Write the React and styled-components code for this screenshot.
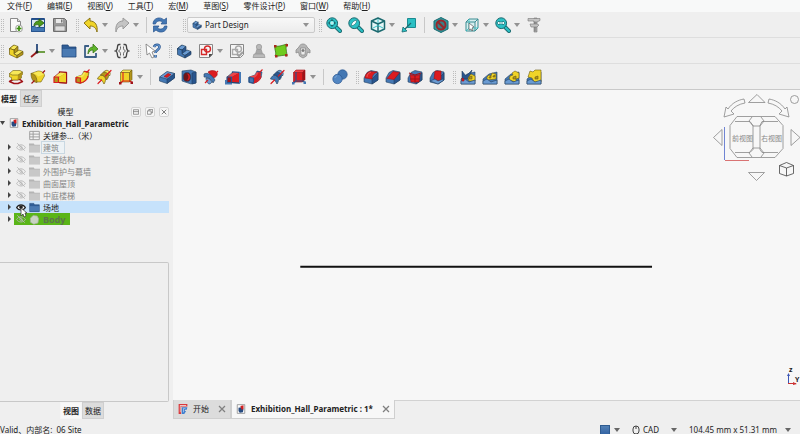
import React, { useState } from 'react';
import styled, { createGlobalStyle } from 'styled-components';

const GlobalStyle = createGlobalStyle`
  * {
    box-sizing: border-box;
  }

  body {
    margin: 0;
    overflow: hidden;
    background: #efefef;
    color: #222;
    font: 8px/12px 'Noto Sans', 'Noto Sans CJK SC', sans-serif;
  }

  button,
  select {
    margin: 0;
    padding: 0;
    border: 0;
    background: none;
    color: inherit;
    font: inherit;
  }

  svg {
    display: block;
    flex: none;
  }
`;

const Window = styled.div`
  display: flex;
  flex-direction: column;
  height: 100vh;
`;

const MenuBar = styled.nav`
  display: flex;
  gap: 15px;
  height: 12px;
  padding-left: 7px;
  background: #f8f9f9;
`;

const MenuButton = styled.button`
  white-space: nowrap;
`;

const ToolRow = styled.div`
  display: flex;
  align-items: center;
  height: 26px;
  border-bottom: 1px solid ${({ $last }) => ($last ? '#c9c9c9' : '#dedede')};
`;

const ToolButton = styled.button`
  display: flex;
  flex: none;
  align-items: center;
  justify-content: center;
  width: 22px;
  height: 22px;
`;

const ArrowButton = styled.button`
  display: flex;
  flex: none;
  align-items: center;
  width: 9px;
  height: 22px;
`;

const Caret = styled.span`
  flex: none;
  border: 3px solid transparent;
  border-top: 4px solid ${({ $dark }) => ($dark ? '#666' : '#929292')};
  border-bottom: 0;
`;

const Handle = styled.span`
  flex: none;
  width: 4px;
  height: 14px;
  margin-left: ${({ $gap = 5 }) => $gap}px;
  background:
    linear-gradient(#efefef 50%, transparent 50%) 0 0 / 2px 2px,
    linear-gradient(90deg, #bcbcbc 50%, transparent 50%) 0 0 / 2px 2px;
`;

const Divider = styled.span`
  flex: none;
  width: 1px;
  height: 16px;
  margin: 0 ${({ $gap = 5 }) => $gap}px 0 4px;
  background: #c8c8c8;
`;

const Workbench = styled.label`
  display: flex;
  align-items: center;
  width: 128px;
  height: 16px;
  padding: 0 5px 0 4px;
  border: 1px solid #cacaca;
  border-radius: 2px;
  background: linear-gradient(#f8f8f8, #ececec);
`;

const WorkbenchSelect = styled.select`
  flex: 1;
  margin-left: 3px;
  appearance: none;
  outline: 0;
`;

const Main = styled.main`
  display: flex;
  flex: 1;
  gap: 4px;
  min-height: 0;
`;

const Side = styled.aside`
  display: flex;
  flex: none;
  flex-direction: column;
  width: 169px;
`;

const SideTabs = styled.div`
  display: flex;
  height: 17px;
  padding-left: ${({ $indent = 0 }) => $indent}px;
`;

const SideTab = styled.button`
  padding: 0 2px;
  border: 1px solid ${({ $active }) => ($active ? '#f5f5f5' : '#cfcfcf')};
  background: ${({ $active }) => ($active ? '#f8f8f8' : '#dcdcdc')};
  font-weight: ${({ $active }) => ($active ? 700 : 400)};
  ${({ $flush }) => $flush && 'padding-left: 0;'}
`;

const PanelTitle = styled.div`
  display: flex;
  align-items: center;
  height: 10px;
  gap: 4px;
`;

const PanelName = styled.span`
  flex: 1;
  padding-left: 4px;
  text-align: center;
`;

const PanelButton = styled.button`
  display: flex;
  align-items: center;
  justify-content: center;
  width: 10px;
  height: 10px;
  border: 1px solid #d4d4d4;
  border-radius: 2px;
  background: #f6f6f6;
`;

const Tree = styled.ul`
  flex: 1;
  margin: 0;
  padding: 0;
  list-style: none;
`;

const Node = styled.li`
  display: flex;
  align-items: center;
  height: 12px;
  padding-left: ${({ $root }) => ($root ? 0 : 7)}px;
  background: ${({ $selected }) => ($selected ? '#c6e2fb' : 'none')};
  color: ${({ $dim }) => ($dim ? '#858585' : '#222')};
`;

const Expander = styled.button`
  width: 7px;
  height: 12px;
  visibility: ${({ $hidden }) => ($hidden ? 'hidden' : 'visible')};
`;

const NodeBody = styled.span`
  display: flex;
  align-items: center;
  height: 12px;
  padding: 0 4px 0 2px;
  ${({ $active }) => $active && `
    background: #5ab518;
    color: #5d7350;
  `}
`;

const EyeButton = styled.button`
  position: relative;
  width: 11px;
  height: 12px;
  margin-right: 2px;
`;

const EyeIcon = styled.span`
  display: flex;
  align-items: center;
  height: 12px;
`;

const Pointer = styled.svg`
  position: absolute;
  top: 6px;
  left: 4px;
  z-index: 1;
`;

const NodeLabel = styled.span`
  margin-left: 2px;
  padding: 0 1px;
  font-size: ${({ $large }) => ($large ? 9 : 8)}px;
  font-weight: ${({ $bold }) => ($bold ? 700 : 400)};
  line-height: 11px;
  ${({ $boxed }) => $boxed && `
    padding-right: 5px;
    outline: 1px solid #c9d8e2;
    background: #edf2f5;
  `}
`;

const Properties = styled.section`
  height: 140px;
  border: 1px solid #c8c8c8;
  border-left: 0;
  border-radius: 0 2px 2px 0;
`;

const Documents = styled.div`
  display: flex;
  flex: 1;
  flex-direction: column;
  min-width: 0;
`;

const View = styled.section`
  position: relative;
  flex: 1;
  background: #f7f7f7;
`;

const Scene = styled.svg`
  position: absolute;
  inset: 0;
  width: 100%;
  height: 100%;
`;

const NavCube = styled.svg`
  position: absolute;
  top: 0;
  right: 0;
`;

const AxisCross = styled.svg`
  position: absolute;
  right: 0;
  bottom: 12px;
`;

const DocTabs = styled.div`
  display: flex;
  height: 19px;

  &::after {
    flex: 1;
    border-top: 1px solid #d2d2d2;
    content: '';
  }
`;

const DocTab = styled.div`
  display: flex;
  align-items: center;
  padding: 0 4px;
  border: 1px solid #cfcfcf;
  border-top: 0;
  background: ${({ $active }) => ($active ? '#f7f7f7' : '#dcdcdc')};
  font-weight: ${({ $active }) => ($active ? 700 : 400)};
`;

const DocName = styled.button`
  display: flex;
  align-items: center;
  gap: 5px;
  white-space: nowrap;
`;

const CloseButton = styled.button`
  margin-left: 9px;
`;

const StatusBar = styled.footer`
  display: flex;
  flex: none;
  align-items: center;
  height: 15px;
  padding: 7px 9px 0 0;
  white-space: nowrap;
`;

const StatusText = styled.span`
  flex: 1;
`;

const StatusButton = styled.button`
  display: flex;
  align-items: center;
  height: 10px;
  margin-left: ${({ $gap = 12 }) => $gap}px;
`;

const StatusValue = styled.span`
  margin: 0 ${({ $gap }) => $gap}px 0 3px;
`;

const Swatch = styled.span`
  width: 10px;
  height: 10px;
  margin-right: 4px;
  border: 1px solid #2e5b90;
  background: linear-gradient(#5280b5, #3465a4);
`;

const Y = '#f0d428';
const YL = '#f8e858';
const YD = '#b3951a';
const R = '#dc1c20';
const RL = '#ec4549';
const RD = '#a01218';
const B = '#4478b4';
const BL = '#6a9bd2';
const BD = '#28558f';
const G = '#c4c4c4';
const TEAL = '#2bc0c4';
const TD = '#1b6a70';
const K = '#23405f';
const KY = '#6d5c12';

function Solid({ light, main, dark, line }) {
  return (
    <g stroke={line} strokeWidth="0.7" strokeLinejoin="round">
      <path fill={main} d="M1.500 5.500l4.500-3.500v5l-4.500 0z" />
      <path fill={light} d="M1.500 5.500L6 2l4 1.500L6 7z" />
      <path fill={dark} d="M6 7l4-3.500V8l-4 3z" />
      <path fill={main} d="M1.500 5.500L6 7v4l3 1.500V15l-7.500-3.500z" />
      <path fill={light} d="M6 10.500l5-3.500 4 1.500-6 4z" />
      <path fill={dark} d="M9 12.500l6-4v3L9 15z" />
    </g>
  );
}

function Magnifier({ children }) {
  return (
    <>
      <path stroke={TD} strokeWidth="4" strokeLinecap="round" d="M10 10l4 4" />
      <path stroke={TEAL} strokeWidth="2.200" strokeLinecap="round" d="M10 10l4 4" />
      <circle cx="6.200" cy="6.200" r="5.400" fill={TEAL} stroke={TD} />
      {children}
    </>
  );
}

function Sketch({ color, mark }) {
  return (
    <>
      <path fill="#f6f6f6" stroke="#888" d="M1.500 1.500h13v10l-3 3h-10z" />
      <g stroke={color} strokeWidth="1.400">
        <path d="M3.500 6.500h5v5h-5z" />
        <circle cx="9.500" cy="6" r="3" />
      </g>
      {mark && <path stroke="#a0a0a0" strokeWidth="2" d="M8 11l2 2 4-4" />}
      {!mark && <path fill="#444" d="M14.500 11l-3.500 3.500V11z" />}
    </>
  );
}

function Loft({ sub }) {
  return (
    <g strokeLinejoin="round">
      <path fill={sub ? RD : YD} stroke={sub ? BD : RD} strokeWidth="1.300" d="M7.500 3l7 .5v10.500l-7-.5z" />
      <path fill={sub ? RL : YL} d="M2 8l6-4.500 6 .5-7 4z" />
      <path fill={sub ? R : Y} d="M7 8l7-4v9.500L7 13z" />
      <path fill={sub ? RD : YD} stroke={sub ? BD : R} strokeWidth="1.200" d="M2 8h4.500v5.500H2z" />
      <path stroke={sub ? K : RD} strokeWidth="0.700" d="M2 8l6-5M6.500 13.500l8 .5" />
      {sub && <path fill={B} d="M0 11h2v3h5v1.500H0zM14 3h2v11h-2z" />}
    </g>
  );
}

function Pipe({ sub }) {
  return (
    <g strokeLinejoin="round">
      <path fill={sub ? B : YD} stroke={sub ? K : KY} strokeWidth="0.6" d="M2 8l6-2 2-4 5 1-1 6-4 4-4 1.500-4-1z" />
      <path fill={sub ? R : Y} d="M6 9c3-1 4-3 5-6l3 1c0 4-2 7-5 9l-3 1z" />
      <path fill={sub ? RL : YL} d="M2 8l6-2 2-3 1.500.5C10.500 6 9 8.500 6 9z" />
      <path stroke={sub ? BD : R} strokeWidth="1.200" d="M2 8.500l4.500.5v5L2 13zM10 2.500l4.500.5" />
      <path stroke={R} strokeWidth="1.100" d="M12.500 3.500l3-3M6.500 14c4-1 7-3 7.500-7" />
    </g>
  );
}

function Helix({ sub }) {
  return (
    <g strokeLinejoin="round" stroke={sub ? K : KY} strokeWidth="0.700">
      <path fill={sub ? B : Y} d="M1.500 10c1-3 4-5 6.500-3 2 2 2 5 0 8-1-2-2-4-3.500-4.500z" />
      <path fill={sub ? BD : YD} d="M4.500 6c2-3 5-4 7-2 2 2 1 5-1 7-1-3-3-5-6-5z" />
      <path fill={sub ? BL : YL} d="M7.500 3c2-2 4-2 5-1 2 1 2 3 1 5-1-2-3-4-6-4z" />
      <path stroke={R} strokeWidth="1.200" strokeLinecap="round" d="M2 14.500l3.500-3.500M9.500 7L15 1.500" />
    </g>
  );
}

function Revolve({ sub }) {
  return sub ? (
    <g strokeLinejoin="round" strokeWidth="0.6">
      <path fill={R} stroke={RD} d="M5 3c3-2 8-2 9 1 1 2-1 4-3 5L9 8z" />
      <path fill={B} stroke={K} d="M1 5c3-2 8 1 11 6l-2 3c-1-3-5-6-9-6z" />
      <path fill={BL} stroke={K} d="M3 9c3 0 5 2 6 4l-2 2c-2 0-4-2-4-6z" />
      <path stroke={R} strokeWidth="1.200" d="M2 14l3-3M12 5l3-3" />
    </g>
  ) : (
    <g strokeLinejoin="round" strokeWidth="0.6">
      <path fill={Y} stroke={KY} d="M1 4.500L8 2c4 0 6.500 2 6.500 5L11 13H6z" />
      <path fill={YL} d="M2 4.500L8 2.500c3 0 5 1 6 3l-6 2c-1-2-3-3-6-3z" />
      <path fill={YD} stroke={KY} d="M1 4.500c4 0 6 4 6 9-4 0-6-4-6-9z" />
      <path stroke={RD} strokeWidth="1.200" d="M1.500 14.500l3-3M12.500 4L15 1.500" />
    </g>
  );
}

function Primitive({ sub }) {
  return (
    <g strokeLinejoin="round">
      <path fill={sub ? R : Y} stroke={sub ? RD : KY} strokeWidth="0.600" d="M2.500 3.500h9v9.500h-9z" />
      <path fill={sub ? RL : YL} stroke={sub ? RD : KY} strokeWidth="0.600" d="M2.500 3.500L5 1h9l-2.500 2.500z" />
      <path fill={sub ? RD : YD} stroke={sub ? RD : KY} strokeWidth="0.600" d="M11.500 3.500L14 1v9.500L11.500 13z" />
      <path stroke={sub ? BD : R} strokeWidth="1.100" d="M2 14.500l3-2.500h7l2 1.500M5 12V3" />
      <path fill={sub ? B : RD} d="M1 13h2.500v2.500H1zM12.500 12.500H15V15h-2.500z" />
    </g>
  );
}

function Dress({ kind }) {
  const face = {
    fillet: 'M2 9c0-4 3-6 5-6.500l7 .5c-3 1-5 3-5 7z',
    chamfer: 'M2 9.500l6-7 6.500 1-5.500 7z',
    draft: 'M3 5.500l5 1.500 5-1.500-1 7.500H4z',
    thickness: 'M6 2h6v9l-3 1-4-2z',
  }[kind];
  return (
    <g stroke={K} strokeWidth="0.6" strokeLinejoin="round">
      <path fill={B} d="M1 9l3-5.500L8 1.500l7 1.500v8l-6 4-8-2z" />
      <path fill={BD} d="M9 10l6-6v7l-6 4z" />
      <path fill={R} stroke={RD} d={face} />
      {kind === 'fillet' && <path stroke="#f08080" d="M4 8c0-3 2-4 4-5" />}
      {kind === 'draft' && <path stroke={RD} strokeWidth="1.100" d="M2 4l6 2 6-2M8 6v8M3 10h10" />}
      {kind === 'thickness' && <path fill={BL} d="M1 12l5-2 3 2 5-2 1 1-6 4z" />}
    </g>
  );
}

function Pattern({ kind }) {
  const bumps = {
    mirrored: 'M8 9l3-4 4 2v5H9z',
    linear: 'M5 8l2-2 2 1 1-3 4 1v5l-9 1z',
    polar: 'M5 11l1-4 3-1-1-2 3-2 4 2v5l-3 1v3z',
    multi: 'M2 8l2-6 3 1 2-2h6v12H8l-2-4z',
  }[kind];
  return (
    <g stroke={K} strokeWidth="0.6" strokeLinejoin="round">
      <path fill={B} d="M1 10l6-5 8-2v12H1z" />
      {kind === 'mirrored' && <path fill={BD} d="M2 2l4 5 6-6-3 9H2z" />}
      <path fill={Y} stroke={KY} d={bumps} />
      <path fill={YD} stroke={KY} d={kind === 'linear' ? 'M7 8l2-1v2H7zM11 7l2-1v2h-2z' : 'M9 8l3-1v3H9z'} />
      <path fill={BL} d="M1 12l4-2 4 3 6-2v4H1z" />
      {kind === 'mirrored' && <path fill={R} stroke={RD} d="M2 9l2 1v2H2z" />}
    </g>
  );
}

const glyphs = {
  new: (
    <>
      <path fill="#fafafa" stroke="#8a8a8a" d="M2.500 1.500h7l3 3v10h-10z" />
      <path fill="#ddd" stroke="#8a8a8a" d="M9.500 1.500v3h3" />
      <circle cx="11" cy="11.500" r="3.500" fill="#f0f5ec" stroke="#8a8a8a" strokeWidth="0.7" />
      <path stroke="#3f8f12" strokeWidth="1.700" d="M11 9v5M8.500 11.500h5" />
    </>
  ),
  open: (
    <>
      <path fill="#dbe6f0" stroke="#204a87" d="M1.500 1.500h13v13h-13z" />
      <path fill={B} stroke={BD} d="M1.500 9.500h3l2 1h8v4h-13zM1.500 2.500h13" />
      <path fill="#4e9a1a" stroke="#245c08" strokeWidth="0.8" d="M4 9c0-4 3-5 5-5V2l5 4-5 4V8C7 7 5 8 4 9z" />
    </>
  ),
  save: (
    <>
      <path fill="#9a9a9a" stroke="#6d6d6d" d="M1.500 1.500h11l2 2v11h-13z" />
      <path fill="#e9e9e9" d="M4 2h7v4H4z" />
      <path fill="#777" d="M9 2.500h1.500v3H9z" />
      <path fill="#dedede" stroke="#777" strokeWidth="0.6" d="M3 9h10v5H3z" />
    </>
  ),
  undo: <path fill={Y} stroke="#8a7414" strokeLinejoin="round" d="M1 6l6-5v3c5 0 8 4 7 11-1-4-3-6-7-6v3z" />,
  redo: <path fill={G} stroke="#999" strokeLinejoin="round" d="M15 6L9 1v3c-5 0-8 4-7 11 1-4 3-6 7-6v3z" />,
  refresh: (
    <g fill={B} stroke={BD} strokeWidth="0.7" strokeLinejoin="round">
      <path d="M1 7C1 1 8-1 12 3l2.500-2v6H9l1.500-2C8 3 4 4 3.500 7z" />
      <path d="M15 9c0 6-7 8-11 4l-2.500 2V9H7l-1.500 2c2.500 2 6.500 1 7-2z" />
    </g>
  ),
  fitAll: (
    <Magnifier>
      <path fill={TD} d="M6 2l2 2H4zM6 10l2-2H4zM2 6l2-2v4zM10 6L8 4v4z" />
      <path stroke="#e8ffff" d="M6 4v4M4 6h4" />
    </Magnifier>
  ),
  fitSel: (
    <Magnifier>
      <path fill="#f7ffff" stroke={TD} strokeWidth="0.6" d="M3 9l1-3 2-2 3-1-1 3-2 2z" />
    </Magnifier>
  ),
  zoom: (
    <Magnifier>
      <path fill="#e8ffff" stroke={TD} strokeWidth="0.7" d="M2 6l2-2v1h4V4l2 2-2 2V7H4v1z" />
    </Magnifier>
  ),
  iso: (
    <g stroke={TD} strokeWidth="1.500" strokeLinejoin="round">
      <path fill="#e4f6f6" d="M8 1l6.500 3v8L8 15l-6.500-3V4z" />
      <path d="M1.500 4L8 7l6.500-3M8 7v8" />
      <path stroke={TEAL} strokeWidth="0.9" d="M8 2v4M3 11l5-2.500 5 2.500" />
    </g>
  ),
  align: (
    <>
      <path fill={TEAL} stroke="#1b8a90" d="M6.500 1.500h8v9h-8z" />
      <path stroke={TD} strokeWidth="1.200" d="M10 6l-6 6" />
      <path fill={TEAL} stroke={TD} strokeWidth="0.8" d="M1 15l1-5 4 4z" />
    </>
  ),
  noDraw: (
    <>
      <path fill="#2a9aa0" stroke={TD} d="M8 .5l7 3.500v8l-7 3.500L1 12V4z" />
      <circle cx="8" cy="8" r="4.500" fill="#3a8086" stroke="#96282c" strokeWidth="2" />
      <path stroke="#96282c" strokeWidth="2" d="M5 5l6 6" />
    </>
  ),
  boxSel: (
    <>
      <path fill="#d6efef" stroke="#3b8c92" d="M2 5h9v9H2zM2 5l3-3h9l-3 3M11 14l3-3V2" />
      <path stroke={TEAL} strokeWidth="0.8" d="M5 2v9h9M5 11l-3 3" />
      <path fill="#fff" stroke="#555" strokeWidth="0.7" d="M5 6l5 4-2 1 1 2-1 1-1-2-2 1z" />
    </>
  ),
  caliper: (
    <g stroke="#777" strokeWidth="0.6">
      <path fill="#aaa" d="M8 1h3v14H8z" />
      <path fill="#c4c4c4" d="M2 1.500h12v2l-3 1.500H8V4H2zM4 7h7l2 1-2 2H5z" />
      <path stroke="#666" d="M8 6h2M8 11h2M8 13h2" />
    </g>
  ),
  part: <Solid light={YL} main={Y} dark={YD} line={KY} />,
  body: <Solid light={BL} main={B} dark={BD} line={K} />,
  axes: (
    <>
      <path stroke="#26487a" strokeWidth="1.800" d="M7 9V1" />
      <path stroke="#9b1b1b" strokeWidth="1.800" d="M7 9l-6 5" />
      <path stroke="#6f9f46" strokeWidth="2" d="M7 9h8" />
      <circle cx="7" cy="9" r="1.500" fill="#222" />
    </>
  ),
  folder: (
    <>
      <path fill="#2f5d96" stroke="#1e4577" strokeWidth="0.8" d="M1 2h6l1 2h7v10H1z" />
      <path fill="#4a7ab2" d="M1.500 6h13v7.500h-13z" />
    </>
  ),
  link: (
    <>
      <path stroke="#3b5f86" strokeWidth="1.800" strokeLinejoin="round" d="M6 3H2v11h11V10" />
      <path fill="#5fb52a" stroke="#2f6a10" strokeWidth="0.7" d="M5 11c0-5 2-7 5-7V1l5 5-5 4V7C8 7 6 8 5 11z" />
    </>
  ),
  braces: (
    <g stroke="#444" strokeWidth="1.300">
      <path d="M6.500 1.500H5c-3 0 0 5.500-3.500 6.500C5 9 2 14.500 5 14.500h1.500M9.500 1.500H11c3 0 0 5.500 3.500 6.500-3.500 1-.5 6.500-3.500 6.500H9.500" />
      <path strokeWidth="0.800" d="M6.500 3.500v2c0 1-1 2-2 2.500 1 .5 2 1.500 2 2.500v2M9.500 3.500v2c0 1 1 2 2 2.500-1 .5-2 1.500-2 2.500v2" />
    </g>
  ),
  help: (
    <>
      <path stroke={BD} strokeWidth="2.600" d="M9 4c1-3 5.500-3 5.500 0s-4 3-4 6M10.500 12v2.500" />
      <path stroke={BL} strokeWidth="1.200" d="M9 4c1-3 5.500-3 5.500 0s-4 3-4 6M10.500 12v2.500" />
      <path fill="#fff" stroke="#777" strokeWidth="0.8" d="M1 1l1 11 2.500-2 2.500 5 2-1-2-5 3-1z" />
    </>
  ),
  sketch: <Sketch color="#d42a2a" />,
  validate: <Sketch color="#aaa" mark />,
  datum: (
    <g fill="#a9a9a9" stroke="#959595" strokeWidth="0.7">
      <path d="M3.500 14L6 6h4l2.500 8z" />
      <circle cx="8" cy="4" r="2.700" fill="#b8b8b8" />
      <path fill="#bbb" d="M3 11h10l1 3.500H2z" />
    </g>
  ),
  binder: (
    <>
      <path fill="#6fcb1f" stroke="#2c6b08" strokeWidth="0.700" d="M2 3c4 1 8-1 12-2-2 4 0 8 0 12-3-2-8 1-12 0 2-4-1-6 0-10z" />
      <g fill="#a82a1c">
        <path d="M1 2h2.500v2.500H1zM12.500 1H15v2.500h-2.500zM2 12h2.500v2.500H2zM12 11h2.500v2.500H12z" />
      </g>
    </>
  ),
  clone: (
    <g fill="#b5b5b5" stroke="#8d8d8d" strokeWidth="0.8">
      <path d="M4 4c1-4 7-4 8 0l3 3v3l-2.500-1-1 4-3.500 2-3.500-2-1-4L1 10V7z" />
      <path fill="#ececec" d="M5.500 5h5L10 12H6z" />
      <circle cx="8" cy="7.500" r="1.200" fill="#777" />
    </g>
  ),
  pad: (
    <g strokeLinejoin="round">
      <path fill="#f4efef" stroke={RD} strokeWidth="1.500" d="M1.500 12.500L5 10.500h7l2.500 2-4.500 2H6z" />
      <path fill={Y} stroke={KY} strokeWidth="0.6" d="M1.500 4.500v3.500l2 .500V11h6l4-2V6.500l1-1V3z" />
      <path fill={YD} d="M10 5.500L14 3v3l-1 1v2l-3.500 2z" />
      <path fill={YL} stroke={KY} strokeWidth="0.6" d="M1.500 4.500L5 1.500h7L14.500 3 10 6H4z" />
    </g>
  ),
  revolution: <Revolve />,
  loft: <Loft />,
  pipe: <Pipe />,
  helix: <Helix />,
  primitive: <Primitive />,
  pocket: (
    <g stroke={K} strokeWidth="0.6" strokeLinejoin="round">
      <path fill={B} d="M.5 8.500L8 3l7.500 1.500V9L8 14.500.5 12z" />
      <path fill={BD} d="M8 10l7.500-5.500V9L8 14.500z" />
      <path fill={BL} d="M.5 8L8 2.500l7.500 2L8 10z" />
      <path fill={R} stroke={RD} d="M5 7.500l4-3 3 1L8 8.500z" />
    </g>
  ),
  hole: (
    <g stroke={K} strokeWidth="0.6">
      <path fill={B} d="M1 2l9-1 5 2v11l-5 1-9-3z" />
      <path fill={BD} d="M11 4l4-1v11l-4 1z" />
      <ellipse cx="6" cy="8" rx="3.700" ry="4.500" fill="#6e1419" />
      <path fill={R} stroke="none" d="M6 4.500c4 0 4 7 0 7 2-2 2-5 0-7z" />
    </g>
  ),
  groove: <Revolve sub />,
  subLoft: <Loft sub />,
  subPipe: <Pipe sub />,
  subHelix: <Helix sub />,
  subPrimitive: <Primitive sub />,
  boolean: (
    <g stroke={BD} strokeWidth="0.7">
      <circle cx="10.500" cy="5.500" r="4.700" fill="#4377b3" />
      <circle cx="5.500" cy="10" r="4.700" fill="#5286c2" />
      <path stroke="#8cb4e0" d="M3 9c0-1 1-2 2-2" />
    </g>
  ),
  fillet: <Dress kind="fillet" />,
  chamfer: <Dress kind="chamfer" />,
  draft: <Dress kind="draft" />,
  thickness: <Dress kind="thickness" />,
  mirrored: <Pattern kind="mirrored" />,
  linear: <Pattern kind="linear" />,
  polar: <Pattern kind="polar" />,
  multi: <Pattern kind="multi" />,
  greyFolder: (
    <>
      <path fill="#b4b4b4" d="M0 2h7l1 2h8v11H0z" />
      <path fill="#c8c8c8" d="M0 5h16v10H0z" />
    </>
  ),
  sheet: (
    <path fill="#f2f2f2" stroke="#999" strokeWidth="1.300" d="M1 2h14v12H1zM1 6h14M1 10h14M6 2v12" />
  ),
  doc: (
    <>
      <path fill="#fafafa" stroke="#888" strokeWidth="1.200" d="M2 1h12v14H2z" />
      <path fill="#274b80" d="M4 6l5-1 3 3-1 5-5 1-2-3z" />
      <path fill="#d12020" d="M7 3l5-1v6l-3 1z" />
    </>
  ),
  greyBody: <path fill="#c9d3c2" stroke="#9fae94" d="M2 6l4-4 6 1 2 4-1 6-6 2-5-3z" />,
  eye: (
    <>
      <path fill="#fff" stroke="#222" strokeWidth="1.800" d="M1 9c3-6 11-6 14 0-3 5-11 5-14 0z" />
      <circle cx="8" cy="8" r="3" fill="#222" />
    </>
  ),
  hidden: (
    <path stroke="#b5b5b5" strokeWidth="1.400" d="M1 9c3-6 11-6 14 0-3 5-11 5-14 0zM2 2l12 12M6 8c0-2 4-2 4 1s-4 2-4-1" />
  ),
  logo: (
    <>
      <path fill="#d9383c" d="M1 0h14v4H5v12H1z" />
      <path fill="#f4f4f4" d="M3 2h10v1H4v10H3z" />
      <path fill="#3f7fd0" d="M6 5h9l-1 4h-3v2h2l-3 5H6z" />
      <path fill="#cfe0f5" d="M8 7h4v1H9v5H8z" />
    </>
  ),
  close: <path stroke="#808080" strokeWidth="2.500" d="M2 2l12 12M14 2L2 14" />,
  thinClose: <path stroke="#555" strokeWidth="2" d="M2 2l12 12M14 2L2 14" />,
  dock: <path stroke="#666" strokeWidth="1.800" d="M1 2h14v12H1zM1 7h14" />,
  float: <path stroke="#666" strokeWidth="1.800" d="M5 5V1h10v9h-4M1 5h10v9H1z" />,
};

function Icon({ name, size = 16 }) {
  return (
    <svg width={size} height={size} viewBox="0 0 16 16" fill="none" aria-hidden="true">
      {glyphs[name]}
    </svg>
  );
}

function Tools({ names }) {
  return names.map((entry) => {
    const [name, menu] = entry.split('+');
    return (
      <React.Fragment key={name}>
        <ToolButton aria-label={name}>
          <Icon name={name} />
        </ToolButton>
        {menu !== undefined && (
          <ArrowButton aria-label={`${name} menu`}>
            <Caret />
          </ArrowButton>
        )}
      </React.Fragment>
    );
  });
}

const menus = [
  ['文件', 'F'],
  ['编辑', 'E'],
  ['视图', 'V'],
  ['工具', 'T'],
  ['宏', 'M'],
  ['草图', 'S'],
  ['零件设计', 'P'],
  ['窗口', 'W'],
  ['帮助', 'H'],
];

function Toolbars() {
  return (
    <>
      <ToolRow>
        <Handle $gap={1} />
        <Tools names={['new', 'open', 'save']} />
        <Handle />
        <Tools names={['undo+', 'redo+']} />
        <Divider $gap={2} />
        <Tools names={['refresh']} />
        <Handle $gap={12} />
        <Workbench>
          <Icon name="body" size={10} />
          <WorkbenchSelect aria-label="Workbench">
            <option>Part Design</option>
          </WorkbenchSelect>
          <Caret />
        </Workbench>
        <Handle $gap={4} />
        <Tools names={['fitAll', 'fitSel', 'iso+', 'align']} />
        <Divider />
        <Tools names={['noDraw+', 'boxSel+', 'zoom+', 'caliper']} />
      </ToolRow>
      <ToolRow>
        <Handle $gap={1} />
        <Tools names={['part', 'axes+', 'folder', 'link+', 'braces']} />
        <Handle />
        <Tools names={['help']} />
        <Handle />
        <Tools names={['body', 'sketch+', 'validate', 'datum', 'binder', 'clone']} />
      </ToolRow>
      <ToolRow $last>
        <Handle $gap={1} />
        <Tools names={['pad', 'revolution', 'loft', 'pipe', 'helix', 'primitive+']} />
        <Divider />
        <Tools names={['pocket', 'hole', 'groove', 'subLoft', 'subPipe', 'subHelix', 'subPrimitive+']} />
        <Divider />
        <Tools names={['boolean']} />
        <Handle />
        <Tools names={['fillet', 'chamfer', 'draft', 'thickness']} />
        <Handle />
        <Tools names={['mirrored', 'linear', 'polar', 'multi']} />
      </ToolRow>
    </>
  );
}

const groups = [
  { name: '建筑', boxed: true },
  { name: '主要结构' },
  { name: '外围护与幕墙' },
  { name: '曲面屋顶' },
  { name: '中庭楼梯' },
  { name: '场地', visible: true },
  { name: 'Body', active: true },
];

function Triangle({ open }) {
  return (
    <svg width="5" height="6" viewBox="0 0 5 6" aria-hidden="true">
      <path fill="#444" d={open ? 'M0 1h5L2.500 5z' : 'M1 0l3 3-3 3z'} />
    </svg>
  );
}

function ModelTree() {
  const [selected, setSelected] = useState('场地');

  return (
    <Tree>
      <Node $root>
        <Expander aria-label="collapse">
          <Triangle open />
        </Expander>
        <NodeBody>
          <Icon name="doc" size={10} />
          <NodeLabel $bold>Exhibition_Hall_Parametric</NodeLabel>
        </NodeBody>
      </Node>
      <Node>
        <Expander $hidden />
        <NodeBody>
          <EyeButton as="span" />
          <Icon name="sheet" size={11} />
          <NodeLabel>关键参…（米）</NodeLabel>
        </NodeBody>
      </Node>
      {groups.map(({ name, boxed, visible, active }) => (
        <Node
          key={name}
          $dim={!visible}
          $selected={name === selected}
          onClick={() => setSelected(name)}
        >
          <Expander aria-label={`expand ${name}`}>
            <Triangle />
          </Expander>
          <NodeBody $active={active}>
            <EyeButton aria-label={`toggle ${name}`}>
              <EyeIcon>
                <Icon name={visible ? 'eye' : 'hidden'} size={10} />
              </EyeIcon>
              {visible && (
                <Pointer width="8" height="11" viewBox="0 0 8 11">
                  <path fill="#fff" stroke="#444" strokeWidth="0.8" d="M1 1v8l2-2 1 3 2-1-1-3h2z" />
                </Pointer>
              )}
            </EyeButton>
            <Icon name={active ? 'greyBody' : visible ? 'folder' : 'greyFolder'} size={11} />
            <NodeLabel $boxed={boxed} $bold={active} $large={active}>
              {name}
            </NodeLabel>
          </NodeBody>
        </Node>
      ))}
    </Tree>
  );
}

function NavigationCube() {
  return (
    <NavCube width="90" height="96" viewBox="710 90 90 96" fill="none" stroke="#888" strokeWidth="0.8">
      <path d="M748.500 102.500l8.500-8 8 8zM748.500 172.500h16l-8 8zM713.500 137.500l8.500-8v16zM800 137.500l-9-8v16z" />
      <path d="M744 99l1 4c-6 1-11 4-14 8l3 3-10 3 2-10 2 2c4-6 10-9 16-10z" />
      <path d="M769 99l-1 4c6 1 11 4 14 8l-3 3 10 3-2-10-2 2c-4-6-10-9-16-10z" />
      <circle cx="794.500" cy="99.500" r="4" />
      <path d="M737 116.500h38l8 9v23l-8 9h-38l-7-9v-23z" />
      <path d="M735 121.500h15l3 4v24l-3 3h-15M778 121.500h-16l-2 4v24l2 3h16" />
      <path d="M752 117l-3 4 4 5h7l4-5-3-4M752 157l-3-4 4-5h7l4 5-3 4" />
      <path d="M779.500 165.500l7-3 7 3v8l-7 2.500-7-2.500zM779.500 165.500l7 2.500 7-2.500M786.500 168v8" stroke="#444" />
      <path stroke="#4b66c9" d="M724.500 127v33" />
      <path stroke="#d05050" d="M725 160.500h24" />
      <g fill="#888" stroke="none" fontFamily="'Liberation Serif', 'Noto Sans CJK SC', serif" fontSize="7">
        <text x="732" y="141">前视图</text>
        <text x="761" y="141">右视图</text>
      </g>
    </NavCube>
  );
}

function Viewport() {
  return (
    <View>
      <Scene>
        <line x1="20.3%" x2="76.4%" y1="57%" y2="57%" stroke="#111" strokeWidth="2" />
      </Scene>
      <NavigationCube />
      <AxisCross width="14" height="22" viewBox="0 0 14 22">
        <path stroke="#3c56b5" d="M2.500 18V8" />
        <path stroke="#c33" d="M2 17.500h8" />
        <path fill="#c33" d="M7 16l4 2-4 1z" />
        <path fill="#3c56b5" d="M1 10l1.500-3L4 10z" />
        <g fill="#222" fontSize="7" fontWeight="700">
          <text x="3" y="6">z</text>
          <text x="9" y="16">Y</text>
        </g>
      </AxisCross>
    </View>
  );
}

function App() {
  return (
    <Window>
      <GlobalStyle />
      <MenuBar>
        {menus.map(([label, key]) => (
          <MenuButton key={key}>
            {label}(<u>{key}</u>)
          </MenuButton>
        ))}
      </MenuBar>
      <Toolbars />
      <Main>
        <Side>
          <SideTabs>
            <SideTab $active $flush>模型</SideTab>
            <SideTab>任务</SideTab>
          </SideTabs>
          <PanelTitle>
            <PanelName>模型</PanelName>
            <PanelButton aria-label="dock">
              <Icon name="dock" size={6} />
            </PanelButton>
            <PanelButton aria-label="float">
              <Icon name="float" size={6} />
            </PanelButton>
            <PanelButton aria-label="close">
              <Icon name="thinClose" size={6} />
            </PanelButton>
          </PanelTitle>
          <ModelTree />
          <Properties />
          <SideTabs $indent={60}>
            <SideTab $active>视图</SideTab>
            <SideTab>数据</SideTab>
          </SideTabs>
        </Side>
        <Documents>
          <Viewport />
          <DocTabs>
            <DocTab>
              <DocName>
                <Icon name="logo" size={10} />
                开始
              </DocName>
              <CloseButton aria-label="close 开始">
                <Icon name="close" size={8} />
              </CloseButton>
            </DocTab>
            <DocTab $active>
              <DocName>
                <Icon name="doc" size={10} />
                Exhibition_Hall_Parametric : 1*
              </DocName>
              <CloseButton aria-label="close document">
                <Icon name="close" size={8} />
              </CloseButton>
            </DocTab>
          </DocTabs>
        </Documents>
      </Main>
      <StatusBar>
        <StatusText>Valid、内部名:&nbsp; 06 Site</StatusText>
        <StatusButton aria-label="notifications">
          <Swatch />
          <Caret $dark />
        </StatusButton>
        <StatusButton>
          <svg width="8" height="10" viewBox="0 0 8 10" fill="none" stroke="#444" aria-hidden="true">
            <rect x="1" y="1" width="6" height="8" rx="3" />
            <path d="M4 1v3" />
          </svg>
          <StatusValue $gap={12}>CAD</StatusValue>
          <Caret $dark />
        </StatusButton>
        <StatusButton $gap={9}>
          <StatusValue $gap={8}>104.45 mm x 51.31 mm</StatusValue>
          <Caret $dark />
        </StatusButton>
      </StatusBar>
    </Window>
  );
}

export default App;
